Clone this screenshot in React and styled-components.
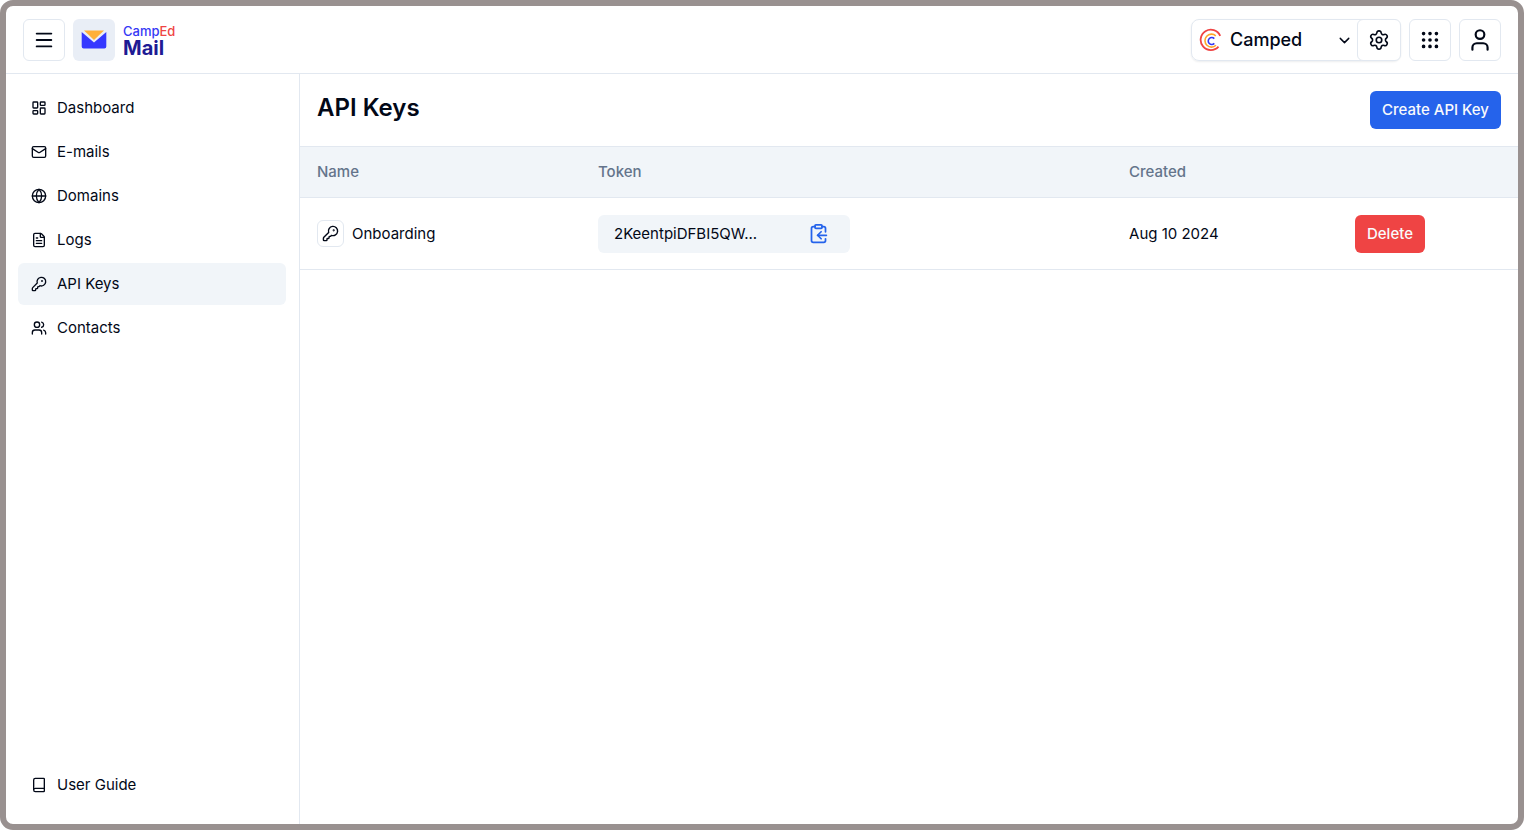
import React from 'react';
import styled, { createGlobalStyle } from 'styled-components';
import {
  Menu,
  ChevronDown,
  Settings,
  Grip,
  User,
  LayoutDashboard,
  Mail,
  Globe,
  FileText,
  KeyRound,
  Users,
  Book,
  ClipboardCopy,
} from 'lucide-react';

const GlobalStyle = createGlobalStyle`
  * {
    box-sizing: border-box;
  }
  body {
    margin: 0;
    background-color: white;
    color: #020817;
    font-family: Inter, "Liberation Sans", sans-serif;
    font-size: 15px;
    line-height: 22px;
  }
  button, select {
    font: inherit;
    color: inherit;
    cursor: pointer;
  }
`

const Frame = styled.div`
  display: flex;
  flex-direction: column;
  min-height: 100vh;
  border: 6px solid #999190;
  border-radius: 13px;
`

const HeaderBody = styled.header`
  display: flex;
  align-items: center;
  justify-content: space-between;
  padding: 13px 17px 12px;
  border-bottom: 1px solid #e2e8f0;
`

const HeaderGroup = styled.div`
  display: flex;
  align-items: center;
  gap: 8px;
`

const IconButton = styled.button`
  display: flex;
  align-items: center;
  justify-content: center;
  width: 42px;
  height: 42px;
  padding: 0;
  background-color: white;
  border: 1px solid #e2e8f0;
  border-radius: 6px;
`

const Brand = styled.a`
  display: flex;
  align-items: center;
  gap: 8px;
  text-decoration: none;
  .brand-tile{
    display: flex;
    align-items: center;
    justify-content: center;
    width: 42px;
    height: 42px;
    background-color: #e9eef6;
    border-radius: 6px;
  }
  .brand-text{
    display: flex;
    flex-direction: column;
    padding-top: 2px;
  }
`

const BrandTop = styled.span`
  color: #3538f5;
  font-size: 13px;
  font-weight: 500;
  line-height: 14px;
  em{
    color: #ef4444;
    font-style: normal;
  }
`

const BrandName = styled.span`
  color: #1e1b94;
  font-size: 20px;
  font-weight: 700;
  line-height: 20px;
`

const OrgBox = styled.div`
  display: flex;
  border: 1px solid #e2e8f0;
  border-radius: 8px;
  box-shadow: 0 1px 2px rgba(15, 23, 42, 0.08);
  button{
    margin: -1px;
    width: 44px;
  }
`

const OrgPicker = styled.label`
  display: flex;
  align-items: center;
  width: 166px;
  padding: 0 5px 0 7px;
  select{
    flex: 1;
    min-width: 0;
    margin-left: 7px;
    padding: 0;
    border: 0;
    background: transparent;
    appearance: none;
    font-size: 18px;
    font-weight: 500;
    line-height: 28px;
  }
`

const Body = styled.div`
  display: flex;
  flex: 1;
`

const Sidebar = styled.nav`
  display: flex;
  flex-direction: column;
  justify-content: space-between;
  flex: none;
  width: 294px;
  padding: 13px 13px 18px 12px;
  border-right: 1px solid #e2e8f0;
`

const NavList = styled.div`
  display: flex;
  flex-direction: column;
  gap: 2px;
`

const NavItem = styled.a`
  display: flex;
  align-items: center;
  gap: 10px;
  height: 42px;
  padding: 0 13px;
  border-radius: 6px;
  background-color: ${props => props.$active ? '#f1f5f9' : 'transparent'};
  color: inherit;
  text-decoration: none;
  &:hover{
    background-color: #f1f5f9;
  }
`

const Main = styled.main`
  flex: 1;
  min-width: 0;
`

const TitleBar = styled.div`
  display: flex;
  align-items: center;
  justify-content: space-between;
  padding: 17px;
  h1{
    margin: 0 0 4px;
    font-size: 24px;
    font-weight: 600;
    line-height: 32px;
  }
`

const Button = styled.button`
  height: 38px;
  padding: 0 12px;
  border: 0;
  border-radius: 6px;
  background-color: ${props => props.$danger ? '#ef4444' : '#2563eb'};
  color: #f8fafc;
  font-weight: 500;
`

const Table = styled.table`
  width: 100%;
  border-collapse: collapse;
  table-layout: fixed;
  th, td{
    padding: 0 17px;
    text-align: left;
    border-bottom: 1px solid #e2e8f0;
  }
  th{
    height: 51px;
    border-top: 1px solid #e2e8f0;
    background-color: #f1f5f9;
    color: #64748b;
    font-weight: 500;
  }
  td{
    height: 72px;
  }
`

const Col = styled.col`
  width: ${props => props.$width};
`

const KeyName = styled.div`
  display: flex;
  align-items: center;
  gap: 8px;
  .key-icon{
    display: flex;
    align-items: center;
    justify-content: center;
    width: 27px;
    height: 27px;
    border: 1px solid #e2e8f0;
    border-radius: 6px;
  }
`

const Token = styled.div`
  display: flex;
  align-items: center;
  justify-content: space-between;
  width: 252px;
  height: 38px;
  padding: 0 21px 0 16px;
  border-radius: 6px;
  background-color: #f1f5f9;
  button{
    display: flex;
    padding: 0;
    border: 0;
    background: none;
    color: #2563eb;
  }
`

const links = [
  { label: 'Dashboard', icon: LayoutDashboard },
  { label: 'E-mails', icon: Mail },
  { label: 'Domains', icon: Globe },
  { label: 'Logs', icon: FileText },
  { label: 'API Keys', icon: KeyRound, active: true },
  { label: 'Contacts', icon: Users },
];

const keys = [
  { name: 'Onboarding', token: '2KeentpiDFBI5QW...', created: 'Aug 10 2024' },
];

const MailLogo = () => (
  <svg width="26" height="20" viewBox="0 0 26 20" aria-hidden="true">
    <path d="M3 0.500h20L13 10z" fill="#ffb038" />
    <path d="M0.700 2L13 12.500 25.300 2V16.500a2 2 0 0 1-2 2h-20.600a2 2 0 0 1-2-2z" fill="#3538ff" />
  </svg>
);

const CampedLogo = () => (
  <svg width="24" height="24" viewBox="0 0 24 24" fill="none" aria-hidden="true">
    <path d="M21.200 7.800A10.200 10.200 0 1 0 19.500 18.600" stroke="#ef4444" strokeWidth="1.8" />
    <path d="M16.800 7.800A6.500 6.500 0 1 0 17 17.300" stroke="#ffa62b" strokeWidth="1.6" />
    <path d="M15.300 10.600A3.500 3.500 0 1 0 15.300 15.400" stroke="#3538f5" strokeWidth="1.600" />
  </svg>
);

function Header() {
  return (
    <HeaderBody>
      <HeaderGroup>
        <IconButton aria-label="Menu"><Menu size={22} /></IconButton>
        <Brand href="#">
          <span className="brand-tile"><MailLogo /></span>
          <span className="brand-text">
            <BrandTop>Camp<em>Ed</em></BrandTop>
            <BrandName>Mail</BrandName>
          </span>
        </Brand>
      </HeaderGroup>
      <HeaderGroup>
        <OrgBox>
          <OrgPicker>
            <CampedLogo />
            <select aria-label="Organization">
              <option>Camped</option>
            </select>
            <ChevronDown size={17} />
          </OrgPicker>
          <IconButton aria-label="Settings"><Settings size={22} strokeWidth={1.75} /></IconButton>
        </OrgBox>
        <IconButton aria-label="Apps"><Grip size={22} /></IconButton>
        <IconButton aria-label="Account"><User size={26} /></IconButton>
      </HeaderGroup>
    </HeaderBody>
  );
}

function SideNav() {
  return (
    <Sidebar>
      <NavList>
        {links.map(({ label, icon: Icon, active }) => (
          <NavItem key={label} href="#" $active={active}>
            <Icon size={16} />
            {label}
          </NavItem>
        ))}
      </NavList>
      <NavItem href="#">
        <Book size={16} />
        User Guide
      </NavItem>
    </Sidebar>
  );
}

function KeysTable() {
  return (
    <Table>
      <colgroup>
        <Col $width="23.070%" />
        <Col $width="43.600%" />
        <Col $width="18.550%" />
        <Col />
      </colgroup>
      <thead>
        <tr>
          <th>Name</th>
          <th>Token</th>
          <th>Created</th>
          <th aria-label="Actions" />
        </tr>
      </thead>
      <tbody>
        {keys.map(key => (
          <tr key={key.name}>
            <td>
              <KeyName>
                <span className="key-icon"><KeyRound size={17} /></span>
                {key.name}
              </KeyName>
            </td>
            <td>
              <Token>
                {key.token}
                <button aria-label="Copy token"><ClipboardCopy size={21} /></button>
              </Token>
            </td>
            <td>{key.created}</td>
            <td><Button $danger>Delete</Button></td>
          </tr>
        ))}
      </tbody>
    </Table>
  );
}

function App() {
  return (
    <Frame>
      <GlobalStyle />
      <Header />
      <Body>
        <SideNav />
        <Main>
          <TitleBar>
            <h1>API Keys</h1>
            <Button>Create API Key</Button>
          </TitleBar>
          <KeysTable />
        </Main>
      </Body>
    </Frame>
  );
}

export default App;
